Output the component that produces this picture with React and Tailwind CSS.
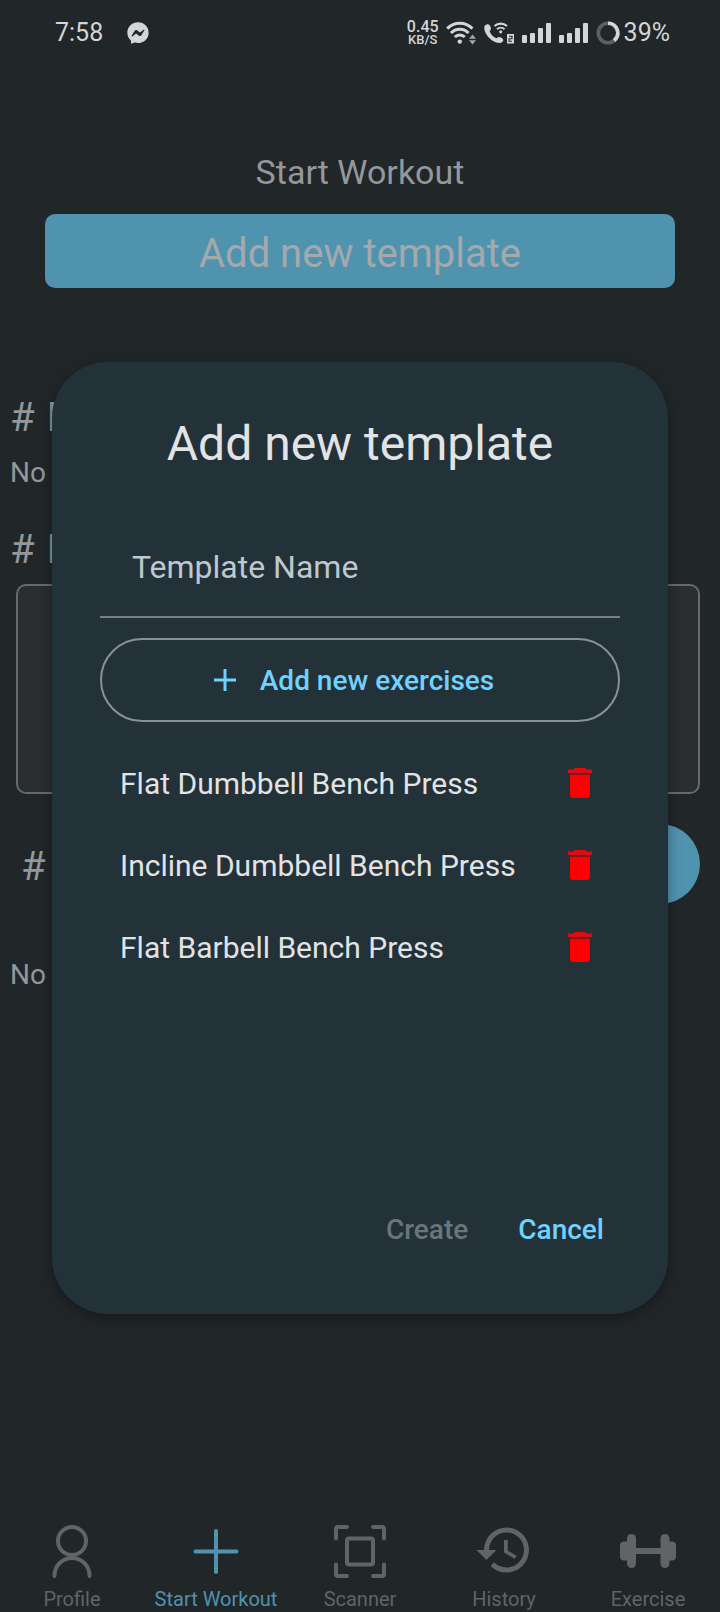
import React from "react";
import { FaFacebookMessenger } from "react-icons/fa";
import { MdHistory } from "react-icons/md";

function WifiIcon() {
  return (
    <svg className="h-6 w-[30px]" viewBox="0 0 30 24" fill="none" stroke="#d3d5d6" strokeWidth="3">
      <path d="M1.2 7.6a17.5 17.5 0 0 1 25.2 0" />
      <path d="M5 12a12 12 0 0 1 17.6 0" />
      <path d="M8.8 16a7 7 0 0 1 10 0" />
      <circle cx="13.8" cy="20.6" r="2.2" fill="#d3d5d6" stroke="none" />
      <path d="M26.5 13.5l3.5 4.2h-7zM26.5 23.5l3.5-4.2h-7z" fill="#a4a7a9" stroke="none" />
    </svg>
  );
}

function WifiCallIcon() {
  return (
    <svg className="h-6 w-8" viewBox="0 0 32 24" fill="none">
      <path
        d="M1.4 5.6C2 3.6 4.4 2.6 6 3.8c1.4 1 2 2.600 1.900 4.400-.1.900-1.500 1.500-1.200 2.400 1 2.800 3.600 5.500 6.400 6.600.9.300 1.600-1.100 2.500-1.100 1.800 0 3.600.8 4.400 2.200.900 1.500-.6 3.200-2.600 3.600C9.500 22.800 0 12.500 1.400 5.600z"
        fill="#d3d5d6"
      />
      <path d="M11.5 5a9.500 9.500 0 0 1 12.500 0" stroke="#d3d5d6" strokeWidth="2.2" />
      <path d="M14 8.300a5.500 5.500 0 0 1 7.500 0" stroke="#d3d5d6" strokeWidth="2" />
      <circle cx="17.7" cy="10.8" r="1.6" fill="#d3d5d6" />
      <rect x="24" y="13" width="7" height="9.5" fill="#d3d5d6" />
      <path d="M26 15.300h3v2.400h-3v2.600h3" stroke="#212629" strokeWidth="1.1" />
    </svg>
  );
}

function SignalIcon() {
  return (
    <svg className="h-6 w-[30px]" viewBox="0 0 30 24" fill="#d3d5d6">
      <rect x="0" y="14" width="5" height="8" rx="1" />
      <rect x="8" y="12" width="5" height="10" rx="1" />
      <rect x="16" y="7" width="5" height="15" rx="1" />
      <rect x="24" y="2" width="5" height="20" rx="1" />
    </svg>
  );
}

function BatteryRing() {
  return (
    <svg className="size-6" viewBox="0 0 24 24" fill="none" strokeWidth="3.6">
      <circle cx="12" cy="12" r="9.7" stroke="#5c6062" />
      <path d="M12 2.300a9.700 9.700 0 0 1 6.200 17.200" stroke="#d3d5d6" />
    </svg>
  );
}

function StatusBar() {
  return (
    <header className="flex h-16 items-center justify-between pt-[2px] pr-[50px] pl-[55px] text-[#d3d5d6]">
      <div className="flex items-center gap-6">
        <span className="text-[25px]">7:58</span>
        <FaFacebookMessenger className="size-[22px]" />
      </div>
      <div className="flex items-center gap-[7px]">
        <div className="flex flex-col items-center font-medium">
          <span className="text-base leading-[14px]">0.45</span>
          <span className="text-[13px] leading-3">KB/S</span>
        </div>
        <WifiIcon />
        <WifiCallIcon />
        <SignalIcon />
        <SignalIcon />
        <div className="flex items-center gap-1">
          <BatteryRing />
          <span className="text-[25px]">39%</span>
        </div>
      </div>
    </header>
  );
}

function TrashIcon() {
  return (
    <svg className="h-[30px] w-6" viewBox="0 0 24 30">
      <path d="M7 0h10l1.500 1.500H24V5H0V1.500h5.500z" fill="#dc0d12" />
      <path d="M7 0h10l1.500 1.500h-13z" fill="#f00508" />
      <rect x="2" y="5" width="20" height="2" fill="#7b171c" />
      <path d="M2 7h20v20a3 3 0 0 1-3 3H5a3 3 0 0 1-3-3z" fill="#ff0000" />
    </svg>
  );
}

const exercises = [
  "Flat Dumbbell Bench Press",
  "Incline Dumbbell Bench Press",
  "Flat Barbell Bench Press",
];

function TemplateDialog() {
  return (
    <div className="absolute inset-0 flex items-center px-[52px]">
      <section
        role="dialog"
        aria-labelledby="dialog-title"
        className="flex w-full flex-col rounded-[56px] bg-[#233138] px-12 pt-14 pb-11 shadow-[0_4px_14px_rgba(0,0,0,0.35)]"
      >
        <h2 id="dialog-title" className="text-center text-5xl leading-[52px] text-[#e1e3e5]">
          Add new template
        </h2>
        <input
          type="text"
          aria-label="Template Name"
          placeholder="Template Name"
          className="mt-9 h-28 w-full border-b-2 border-[#758087] bg-transparent px-8 pt-3 text-[32px] text-[#e1e3e5] outline-none placeholder:text-[#bfc8ce]"
        />
        <button
          type="button"
          className="mt-5 flex h-[84px] items-center justify-center gap-6 rounded-full border-2 border-[#8a9298] pr-3 text-[28px] font-medium text-[#70d2ff]"
        >
          <svg className="size-[22px]" viewBox="0 0 22 22" stroke="currentColor" strokeWidth="3">
            <path d="M11 0v22M0 11h22" />
          </svg>
          <span className="pt-[2px]">Add new exercises</span>
        </button>
        <ul className="mt-5 min-h-[448px]">
          {exercises.map((name) => (
            <li key={name} className="flex h-[82px] items-center justify-between pr-7 pl-5 text-[30px] text-[#e1e3e5]">
              {name}
              <button type="button" aria-label={"Delete " + name}>
                <TrashIcon />
              </button>
            </li>
          ))}
        </ul>
        <div className="flex h-20 justify-end gap-[2px] text-[28px] font-medium">
          <button type="button" disabled className="px-6 text-[#6b757b]">
            Create
          </button>
          <button type="button" className="pr-4 pl-6 text-[#70d2ff]">
            Cancel
          </button>
        </div>
      </section>
    </div>
  );
}

function ProfileIcon() {
  return (
    <svg className="size-[60px]" viewBox="0 0 60 60" fill="none" stroke="currentColor" strokeWidth="4" strokeLinecap="round">
      <circle cx="30" cy="21" r="14" />
      <path d="M12.500 56v-.5a17.500 17.500 0 0 1 35 0v.5" />
    </svg>
  );
}

function PlusIcon() {
  return (
    <svg className="size-[60px]" viewBox="0 0 60 60" fill="none" stroke="currentColor" strokeWidth="4" strokeLinecap="round">
      <path d="M30 11v41M9.500 31.500h41" />
    </svg>
  );
}

function ScannerIcon() {
  return (
    <svg className="size-[60px]" viewBox="0 0 60 60" fill="none" stroke="currentColor" strokeWidth="4" strokeLinecap="round">
      <path d="M6 18.500V9a2 2 0 0 1 2-2h9M43 7h9a2 2 0 0 1 2 2v9.500M54 44.500V54a2 2 0 0 1-2 2h-9M17 56H8a2 2 0 0 1-2-2v-9.500" />
      <rect x="17" y="18.500" width="26" height="26" rx="2" />
    </svg>
  );
}

function BarbellIcon() {
  return (
    <svg className="size-[60px]" viewBox="0 0 60 60" fill="currentColor">
      <rect x="9" y="14" width="9" height="34" rx="4.500" />
      <rect x="42.500" y="14" width="9" height="34" rx="4.500" />
      <rect x="2" y="21.500" width="10" height="19" rx="4" />
      <rect x="48" y="21.500" width="10" height="19" rx="4" />
      <rect x="16" y="28" width="28" height="6" />
    </svg>
  );
}

const tabs = [
  { label: "Profile", icon: <ProfileIcon /> },
  { label: "Start Workout", icon: <PlusIcon />, active: true },
  { label: "Scanner", icon: <ScannerIcon /> },
  { label: "History", icon: <MdHistory className="size-[60px]" /> },
  { label: "Exercise", icon: <BarbellIcon /> },
];

function TabBar() {
  return (
    <nav className="grid grid-cols-5">
      {tabs.map((tab) => (
        <a
          key={tab.label}
          href="#"
          className={
            "flex flex-col items-center gap-[6px] text-xl leading-[26px] whitespace-nowrap " +
            (tab.active ? "text-[#5093ae]" : "text-[#606467]")
          }
        >
          {tab.icon}
          {tab.label}
        </a>
      ))}
    </nav>
  );
}

export default function App() {
  return (
    <div className="flex min-h-screen flex-col bg-[#212629] font-['Roboto',sans-serif] text-[#94989a]">
      <StatusBar />
      <div className="relative flex flex-1 flex-col">
        <main className="flex-1 pt-[88px]">
          <h1 className="text-center text-[34px] leading-10">Start Workout</h1>
          <div className="px-[45px] pt-[22px]">
            <button type="button" className="h-[74px] w-full rounded-[10px] bg-[#5093ae] pt-[6px] text-[40px] text-[#a4a9ac]">
              Add new template
            </button>
          </div>
          <div className="px-[10px] pt-[106px]">
            <h2 className="flex gap-[12px] text-[40px] leading-[48px]">
              <span>#</span>
              <span>M</span>
            </h2>
            <p className="pt-[13px] text-[28px] leading-9">No</p>
            <h2 className="flex gap-[12px] pt-[35px] text-[40px] leading-[48px]">
              <span>#</span>
              <span>P</span>
            </h2>
          </div>
          <div className="mt-[10px] mr-5 ml-4 h-[210px] rounded-[10px] border-2 border-[#656a6d] bg-[#2b2e31]" />
          <div className="mt-[30px] flex items-center justify-between pr-5 pl-[21px]">
            <h2 className="pt-[6px] text-[40px] leading-[48px]">#</h2>
            <button type="button" aria-label="Add" className="size-20 rounded-full bg-[#5093ae]" />
          </div>
          <p className="px-[10px] pt-[53px] text-[28px] leading-9">No</p>
        </main>
        <TabBar />
        <TemplateDialog />
      </div>
    </div>
  );
}
